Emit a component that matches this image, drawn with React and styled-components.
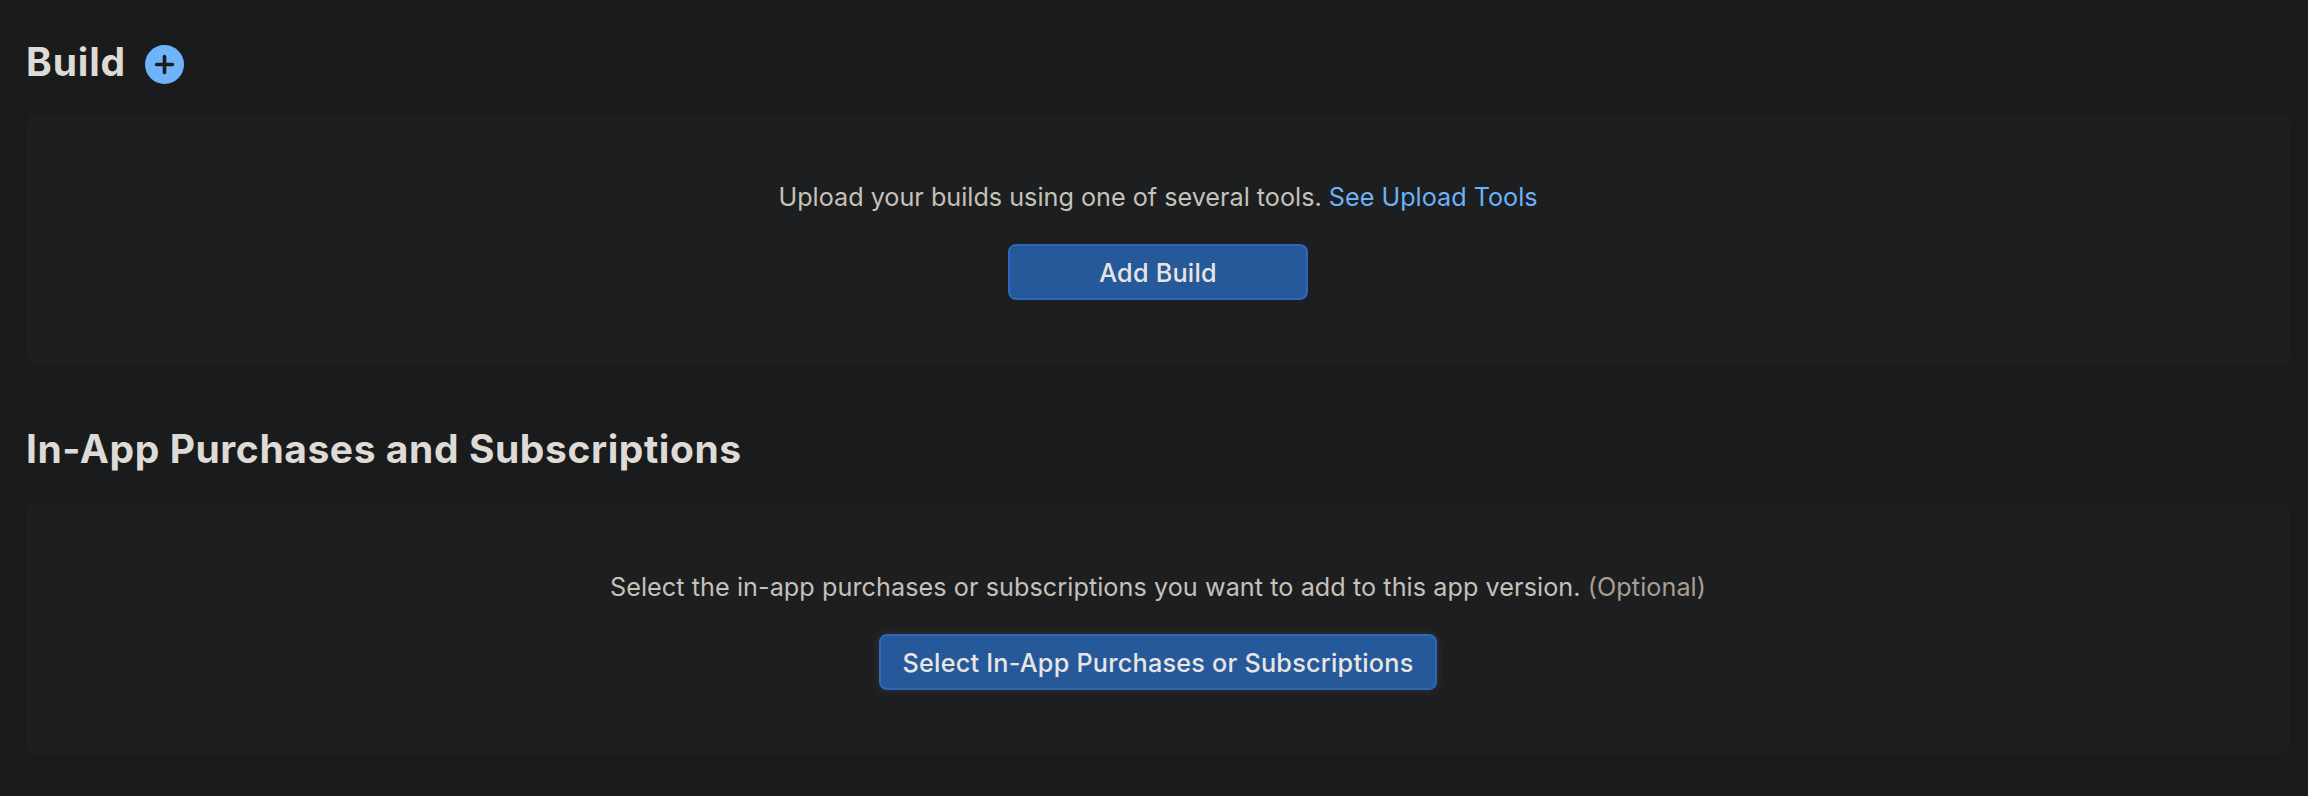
import React from "react";
import styled, { createGlobalStyle } from "styled-components";

const GlobalStyle = createGlobalStyle`
  *, *::before, *::after { box-sizing: border-box; }
  html { background: #1a1b1d; }
  body {
    margin: 0;
    background: #1a1b1d;
    color: #c6c1b9;
    font-family: Inter, "Liberation Sans", sans-serif;
    font-size: 25.2px;
    line-height: 40px;
  }
`;

const Page = styled.main`
  display: flex;
  flex-direction: column;
  min-height: 796px;
  padding: 0 18px 42px 26px;
`;

const Section = styled.section`
  display: flex;
  flex-direction: column;
`;

const SectionHeader = styled.header`
  display: flex;
  align-items: center;
  gap: 19px;
  height: ${({ $height }) => $height}px;
  padding-top: ${({ $offset }) => $offset}px;
`;

const Title = styled.h2`
  margin: 0 0 ${({ $lift }) => $lift || 0}px;
  color: #dedad5;
  font-size: 39px;
  font-weight: 700;
  line-height: 48px;
  letter-spacing: ${({ $tracking }) => $tracking || 0}px;
  white-space: nowrap;
`;

const AddButton = styled.button`
  display: flex;
  width: 39px;
  height: 39px;
  padding: 0;
  border: 0;
  background: none;
  cursor: pointer;

  svg { display: block; }
`;

const Panel = styled.div`
  display: flex;
  flex-direction: column;
  align-items: center;
  height: 250px;
  padding-top: 63px;
  border-radius: 8px;
  background: #1d1e20;
`;

const Message = styled.p`
  margin: 0 0 27px;
  letter-spacing: ${({ $tracking }) => $tracking || 0}px;
  white-space: nowrap;
`;

const Link = styled.a`
  color: #6bb2f9;
  text-decoration: none;
`;

const Optional = styled.span`
  color: #a89f93;
`;

const PrimaryButton = styled.button`
  width: ${({ $width }) => $width}px;
  height: 56px;
  padding: 2px 0 0;
  border: 2px solid #2b67bb;
  border-radius: 8px;
  background: #26599a;
  color: #e8e6e3;
  font: inherit;
  font-weight: 500;
  line-height: 50px;
  letter-spacing: 0.24px;
  white-space: nowrap;
  box-shadow: ${({ $glow }) => ($glow ? "0 0 10px rgba(110, 110, 100, 0.3)" : "none")};
  cursor: pointer;
`;

function PlusCircle() {
  return (
    <svg width="39" height="39" viewBox="0 0 39 39" aria-hidden="true">
      <circle cx="19.5" cy="19.5" r="19.5" fill="#6fb4fb" />
      <path d="M19.5 11.6v15.8M11.6 19.5h15.8" stroke="#1a1b1d" strokeWidth="3.6" strokeLinecap="round" />
    </svg>
  );
}

export default function App() {
  return (
    <>
      <GlobalStyle />
      <Page>
        <Section>
          <SectionHeader $height={114} $offset={14}>
            <Title $tracking={0.85} $lift={4}>Build</Title>
            <AddButton aria-label="Add build"><PlusCircle /></AddButton>
          </SectionHeader>
          <Panel>
            <Message>
              Upload your builds using one of several tools. <Link href="#">See Upload Tools</Link>
            </Message>
            <PrimaryButton $width={300}>Add Build</PrimaryButton>
          </Panel>
        </Section>
        <Section>
          <SectionHeader $height={140} $offset={30}>
            <Title $tracking={0.57}>In-App Purchases and Subscriptions</Title>
          </SectionHeader>
          <Panel>
            <Message $tracking={0.065}>
              Select the in-app purchases or subscriptions you want to add to this app version.{" "}
              <Optional>(Optional)</Optional>
            </Message>
            <PrimaryButton $width={558} $glow>Select In-App Purchases or Subscriptions</PrimaryButton>
          </Panel>
        </Section>
      </Page>
    </>
  );
}
